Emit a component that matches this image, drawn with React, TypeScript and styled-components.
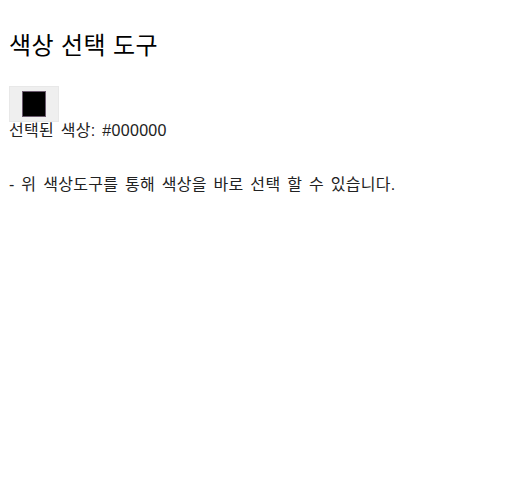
import React, { useState } from "react";
import styled, { createGlobalStyle } from "styled-components";

const GlobalStyle = createGlobalStyle`
  html, body {
    margin: 0;
    padding: 0;
    background: #ffffff;
  }
  body {
    font-family: "Liberation Sans", "Noto Sans CJK KR", sans-serif;
    color: #222222;
  }
`;

const Page = styled.div`
  padding: 30px 9px;
`;

const Title = styled.h2`
  margin: 0 0 24px;
  font-size: 24px;
  font-weight: 400;
  letter-spacing: 0.4px;
  line-height: 32px;
  color: #000000;
`;

const Picker = styled.input`
  display: block;
  width: 50px;
  height: 36px;
  padding: 4px 12px;
  margin: 0;
  border: 1px solid #e8e8e8;
  background: #efefef;
  box-sizing: border-box;
  cursor: pointer;

  &::-webkit-color-swatch-wrapper {
    padding: 0;
  }
  &::-webkit-color-swatch {
    border: 1px solid #6b5a6e;
    border-radius: 0;
  }
`;

const Selected = styled.div`
  font-size: 16px;
  letter-spacing: 0.3px;
  word-spacing: 2px;
  line-height: 18px;
  color: #222222;
`;

const Note = styled.p`
  margin: 36px 0 0;
  font-size: 16px;
  letter-spacing: 0.3px;
  word-spacing: 2px;
  line-height: 18px;
  color: #222222;
`;

export default function App() {
  const [color, setColor] = useState("#000000");

  return (
    <>
      <GlobalStyle />
      <Page>
        <Title>색상 선택 도구</Title>
        <Picker
          type="color"
          value={color}
          onChange={(e) => setColor(e.target.value)}
        />
        <Selected>선택된 색상: {color}</Selected>
        <Note>- 위 색상도구를 통해 색상을 바로 선택 할 수 있습니다.</Note>
      </Page>
    </>
  );
}
